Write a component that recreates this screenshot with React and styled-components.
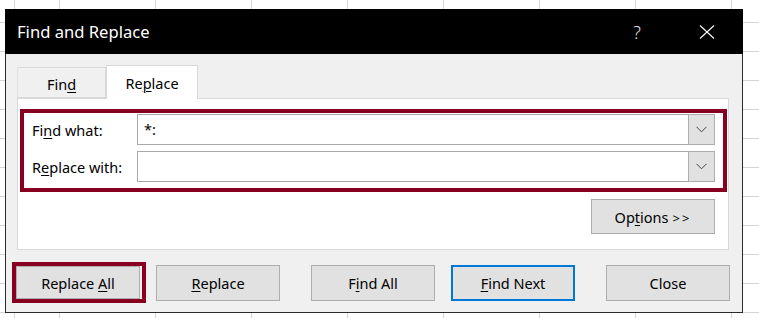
import React from "react";
import styled, { createGlobalStyle } from "styled-components";

const GlobalStyle = createGlobalStyle`
  html, body {
    margin: 0;
    padding: 0;
  }
  body {
    font-family: "Noto Sans", "Open Sans", sans-serif;
    background-color: #ffffff;
  }
`;

const Sheet = styled.div`
  width: 759px;
  height: 318px;
  overflow: hidden;
  padding: 9px 0 0 5px;
  box-sizing: border-box;
  background-color: #ffffff;
  background-image:
    linear-gradient(to right, #d4d4d4 1px, transparent 1px),
    linear-gradient(to right, #d4d4d4 1px, transparent 1px),
    linear-gradient(to bottom, #d4d4d4 1px, transparent 1px);
  background-size: 1px 100%, 96px 100%, 100% 29px;
  background-repeat: no-repeat, repeat-x, repeat-y;
  background-position: 14px 0, 59px 0, 0 22px;
`;

const Dialog = styled.div`
  width: 738px;
  height: 304px;
  display: flex;
  flex-direction: column;
  box-sizing: border-box;
`;

const TitleBar = styled.div`
  height: 45px;
  flex: none;
  background: #000000;
  color: #ffffff;
  display: flex;
  align-items: center;
  padding: 0 28px 0 12px;
`;

const Title = styled.div`
  flex: 1;
  font-size: 16.6px;
`;

const HelpGlyph = styled.span`
  font-size: 18px;
  color: #e0e0e0;
  margin-right: 58px;
  font-weight: 300;
`;

const Body = styled.div`
  flex: 1;
  background: #f0f0f0;
  border: 1px solid #2b2b2b;
  border-top: none;
  display: flex;
  flex-direction: column;
  padding: 11px 13px 0 11px;
`;

const Tabs = styled.div`
  display: flex;
  align-items: flex-end;
  height: 33px;
  position: relative;
  z-index: 1;
`;

const Tab = styled.div`
  box-sizing: border-box;
  width: ${(p) => (p.$w ? p.$w : 88)}px;
  height: ${(p) => (p.$active ? 34 : 31)}px;
  margin-bottom: ${(p) => (p.$active ? -1 : 0)}px;
  background: ${(p) => (p.$active ? "#ffffff" : "#f0f0f0")};
  border: 1px solid #d9d9d9;
  border-bottom: ${(p) => (p.$active ? "none" : "1px solid #d9d9d9")};
  border-left: ${(p) => (p.$active ? "1px solid #d9d9d9" : "1px solid #e3e3e3")};
  display: flex;
  align-items: center;
  justify-content: center;
  font-size: 14.5px;
  color: #000000;
  padding-top: ${(p) => (p.$active ? 0 : 3)}px;
`;

const Panel = styled.div`
  background: #ffffff;
  border: 1px solid #d9d9d9;
  height: 152px;
  box-sizing: border-box;
  padding: 10px 0 0 2px;
  display: flex;
  flex-direction: column;
`;

const Highlight = styled.div`
  border: 4px solid #87001f;
  width: 707px;
  box-sizing: border-box;
  padding: 1px 8px 6px 8px;
  display: flex;
  flex-direction: column;
  gap: 6px;
`;

const FieldRow = styled.div`
  display: flex;
  align-items: center;
`;

const Label = styled.div`
  width: 105px;
  font-size: 14.5px;
  color: #000000;
`;

const Combo = styled.div`
  flex: 1;
  height: 31px;
  box-sizing: border-box;
  border: 1px solid #a9a9a9;
  background: #ffffff;
  display: flex;
`;

const ComboText = styled.div`
  flex: 1;
  font-size: 14.5px;
  padding: 4px 0 0 6px;
  color: #000000;
`;

const DropButton = styled.div`
  width: 25px;
  margin: -1px -1px -1px 0;
  background: #e1e1e1;
  border: 1px solid #adadad;
  display: flex;
  align-items: center;
  justify-content: center;
`;

const OptionsRow = styled.div`
  display: flex;
  justify-content: flex-end;
  padding: 7px 13px 0 0;
`;

const Button = styled.div`
  width: ${(p) => (p.$w ? p.$w : 124)}px;
  height: ${(p) => (p.$h ? p.$h : 36)}px;
  box-sizing: border-box;
  background: #e1e1e1;
  border: ${(p) => (p.$focus ? "2px solid #0078d7" : "1px solid #adadad")};
  display: flex;
  align-items: center;
  justify-content: center;
  color: #000000;
  flex: none;
`;

const ButtonText = styled.span`
  font-size: 14.5px;
  white-space: pre;
`;

const Arrows = styled.span`
  letter-spacing: 2px;
  font-size: 13px;
  margin-left: 4px;
`;

const ButtonRow = styled.div`
  display: flex;
  align-items: flex-start;
  margin: 15px 0 0 -5px;
`;

const ButtonHighlight = styled.div`
  border: 4px solid #87001f;
  margin-top: -3px;
  padding: 0 2px 0 0;
  display: flex;
  flex: none;
`;

const Gap = styled.div`
  width: ${(p) => p.$w}px;
  flex: none;
`;

const U = styled.span`
  text-decoration: underline;
  text-underline-offset: 2px;
  text-decoration-thickness: 1px;
`;

const Chevron = () => (
  <svg width="11" height="7" viewBox="0 0 11 7">
    <polyline points="0.5,0.8 5.5,5.8 10.5,0.8" fill="none" stroke="#444" strokeWidth="1" />
  </svg>
);

const CloseIcon = () => (
  <svg width="16" height="16" viewBox="0 0 16 16">
    <line x1="1" y1="1.5" x2="15" y2="14.5" stroke="#fff" strokeWidth="1.1" />
    <line x1="15" y1="1.5" x2="1" y2="14.5" stroke="#fff" strokeWidth="1.1" />
  </svg>
);

export default function App() {
  return (
    <>
      <GlobalStyle />
      <Sheet>
        <Dialog>
          <TitleBar>
            <Title>Find and Replace</Title>
            <HelpGlyph>?</HelpGlyph>
            <CloseIcon />
          </TitleBar>
          <Body>
            <Tabs>
              <Tab $w={89}>
                <span>
                  Fin<U>d</U>
                </span>
              </Tab>
              <Tab $active $w={92}>
                <span>
                  Re<U>p</U>lace
                </span>
              </Tab>
            </Tabs>
            <Panel>
              <Highlight>
                <FieldRow>
                  <Label>
                    Fi<U>n</U>d what:
                  </Label>
                  <Combo>
                    <ComboText>*:</ComboText>
                    <DropButton>
                      <Chevron />
                    </DropButton>
                  </Combo>
                </FieldRow>
                <FieldRow>
                  <Label>
                    R<U>e</U>place with:
                  </Label>
                  <Combo>
                    <ComboText />
                    <DropButton>
                      <Chevron />
                    </DropButton>
                  </Combo>
                </FieldRow>
              </Highlight>
              <OptionsRow>
                <Button $w={124} $h={35}>
                  <ButtonText>
                    Op<U>t</U>ions<Arrows>&gt;&gt;</Arrows>
                  </ButtonText>
                </Button>
              </OptionsRow>
            </Panel>
            <ButtonRow>
              <ButtonHighlight>
                <Button $h={33}>
                  <ButtonText>
                    {"Replace "}
                    <U>A</U>ll
                  </ButtonText>
                </Button>
              </ButtonHighlight>
              <Gap $w={10} />
              <Button>
                <ButtonText>
                  <U>R</U>eplace
                </ButtonText>
              </Button>
              <Gap $w={31} />
              <Button>
                <ButtonText>
                  F<U>i</U>nd All
                </ButtonText>
              </Button>
              <Gap $w={16} />
              <Button $focus>
                <ButtonText>
                  <U>F</U>ind Next
                </ButtonText>
              </Button>
              <Gap $w={31} />
              <Button>
                <ButtonText>Close</ButtonText>
              </Button>
            </ButtonRow>
          </Body>
        </Dialog>
      </Sheet>
    </>
  );
}
